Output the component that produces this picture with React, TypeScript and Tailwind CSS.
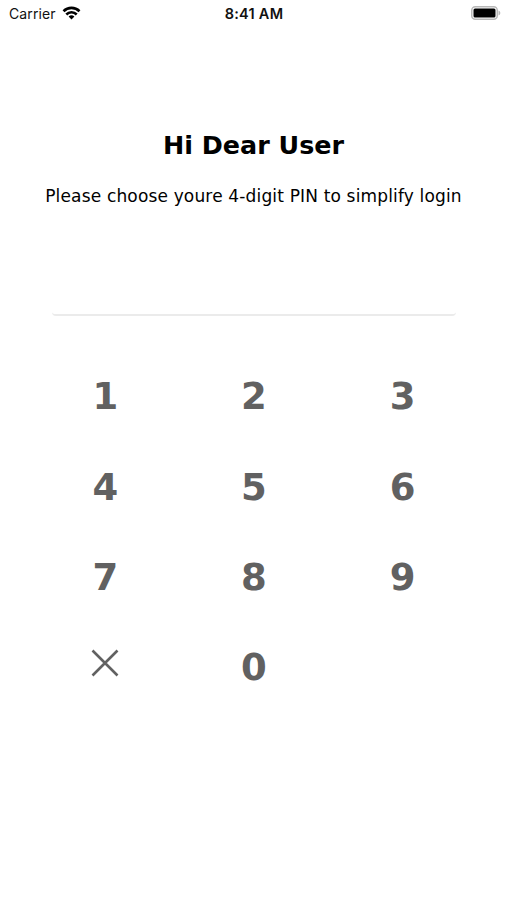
import React from "react";

const keys = ["1", "2", "3", "4", "5", "6", "7", "8", "9", "clear", "0"];

const StatusBar = () => (
  <div className="grid h-[26px] grid-cols-3 items-center pl-[9px] pr-[6px] font-['Inter',sans-serif] text-[14px] text-[#111111]">
    <div className="flex items-center gap-[6px]">
      <span className="tracking-[0.1px]">Carrier</span>
      <svg width="19" height="14" viewBox="0 0 18 14" fill="none" stroke="#000" strokeWidth="2.6">
        <path d="M1 5.2a11.4 11.4 0 0 1 16 0" />
        <path d="M3.8 8.5a7.3 7.3 0 0 1 10.4 0" />
        <path d="M9 13.4 6.1 10.6a4.1 4.1 0 0 1 5.8 0z" fill="#000" stroke="none" />
      </svg>
    </div>
    <span className="-ml-[2px] pt-[2px] text-center text-[14.5px] font-semibold tracking-[0.25px]">8:41 AM</span>
    <svg className="justify-self-end" width="30" height="14" viewBox="0 0 30 14">
      <rect x="0.75" y="0.75" width="25.5" height="12.5" rx="3.5" fill="none" stroke="#b8b8b8" strokeWidth="1.5" />
      <rect x="2.5" y="2.5" width="22" height="9" rx="1.5" fill="#000" />
      <path d="M27.5 4.5c2.4 1 2.4 4 0 5z" fill="#b8b8b8" />
    </svg>
  </div>
);

const Keypad = () => (
  <div className="mr-[30px] ml-[31px] mt-[36px] grid grid-cols-3 text-[37px] font-bold text-[#616161]">
    {keys.map((key) => (
      <button key={key} className="flex h-[90.3px] items-center justify-center">
        {key === "clear" ? (
          <svg className="-mt-[10px]" width="28" height="28" viewBox="0 0 28 28" stroke="#616161" strokeWidth="2.6">
            <path d="M1.5 1.5l25 25M26.5 1.5l-25 25" />
          </svg>
        ) : (
          key
        )}
      </button>
    ))}
  </div>
);

const App = () => {
  return (
    <div className="h-[900px] w-[507px] overflow-hidden bg-white font-['Verdana','DejaVu_Sans',sans-serif] text-black">
      <StatusBar />
      <h1 className="mt-[103px] text-center text-[25.4px] leading-8 font-bold">Hi Dear User</h1>
      <p className="mt-[23px] text-center text-[17px] leading-6 tracking-[0.16px] whitespace-nowrap">
        Please choose youre 4-digit PIN to simplify login
      </p>
      <div className="mr-[51px] ml-[52px] mt-[92px] h-4 rounded-b-[4px] border-b-2 border-[#ebebeb]" />
      <Keypad />
    </div>
  );
};

export default App;
